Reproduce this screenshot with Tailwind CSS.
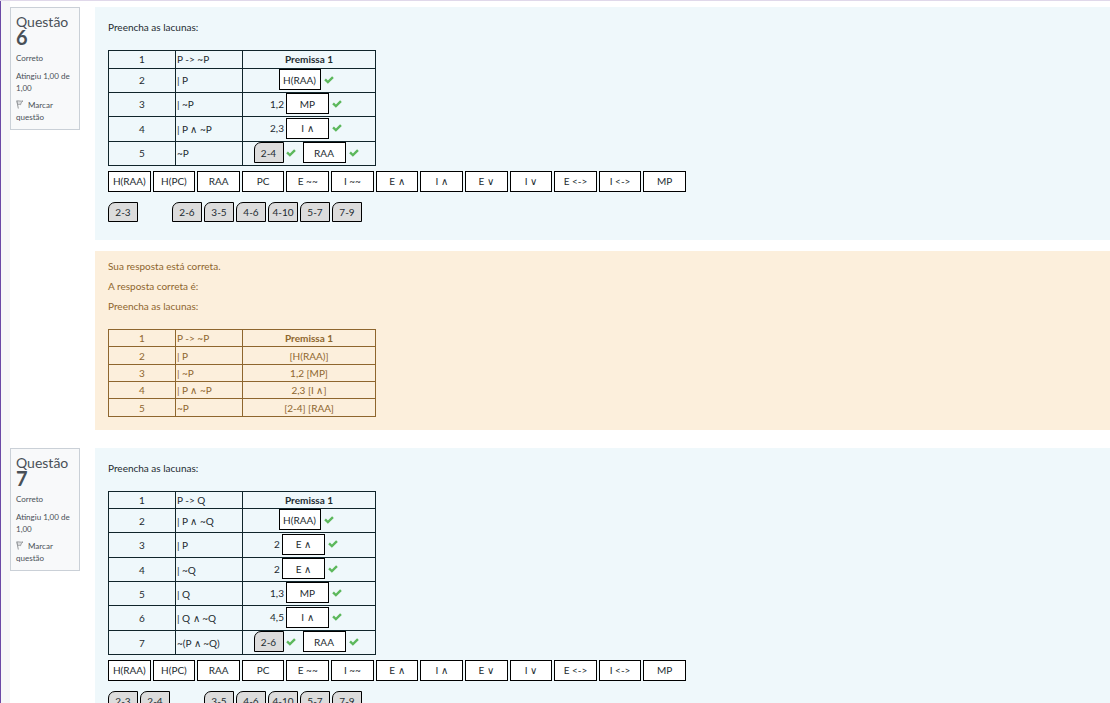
<!DOCTYPE html>
<html lang="pt-BR">
<head>
<meta charset="utf-8">
<title>Questionário</title>
<script src="https://cdn.jsdelivr.net/npm/@tailwindcss/browser@4"></script>
</head>
<body class="min-h-screen overflow-x-hidden border-t border-[#e0d8ea] bg-white font-['Lato',sans-serif] text-[10px] leading-4 text-[#1d2b30]">
<svg class="hidden" aria-hidden="true">
  <symbol id="check" viewBox="0 0 10 8"><path d="M0.200 4.200 1.900 2.500 3.900 4.400 8.100 0.200 9.800 1.900 3.900 7.800z" fill="#5cb85c"/></symbol>
  <symbol id="flag" viewBox="0 0 8 9"><path d="M.8.5 2.300 8.500" fill="none" stroke="#8a8d90" stroke-width=".9"/><path d="M1 1C3 .4 4.500 1.700 7 .9L5.200 2.700 4.600 4.700C3.500 4.200 2.600 4.300 1.700 4.700z" fill="#dcdee0" stroke="#8a8d90" stroke-width=".8"/></symbol>
</svg>
<div class="flex min-h-screen border-l border-[#6b48a5]">
  <div class="w-[9px] shrink-0 bg-[#f6f6f7]"></div>
  <main class="min-w-0 flex-1 pt-[6px]">

    <section class="mb-[18px] flex items-start gap-[15px]">
      <aside class="w-[70px] shrink-0 border border-[#cad0d7] bg-[#f8f9fa] px-[5px] pt-[6px] pb-[6px] text-[8px] leading-3 text-[#495057]">
        <h3 class="text-[14px] leading-[15px]">Questão <b class="block text-[20px] leading-4 font-bold">6</b></h3>
        <p class="mt-[7px]">Correto</p>
        <p class="mt-[6px]">Atingiu 1,00 de 1,00</p>
        <a href="#" class="mt-[5px] block"><svg class="mr-[2px] inline-block h-[9px] w-2 align-[-1px]"><use href="#flag"/></svg> Marcar questão</a>
      </aside>
      <div class="min-w-0 flex-1">
        <div class="bg-[#eff8fb] px-[13px] pt-3 pb-[18px]">
          <p class="mb-[15px]">Preencha as lacunas:</p>
          <table class="w-[268px] table-fixed border-collapse text-center leading-4 [&_td]:border [&_td]:border-[#10252b] [&_td]:p-0 [&_td]:pb-px [&_td:nth-child(2)]:pl-px [&_td:nth-child(2)]:text-left">
            <colgroup><col class="w-[67px]"><col class="w-[67px]"><col></colgroup>
            <tbody>
            <tr class="h-[18px]"><td>1</td><td>P -&gt; ~P</td><td><b>Premissa 1</b></td></tr>
            <tr class="h-6"><td>2</td><td>| P</td><td><div class="flex items-center justify-center pr-[6px] pb-px"><button class="h-[21px] w-[42px] border border-black bg-white">H(RAA)</button><svg class="ml-[3px] h-2 w-[10px]"><use href="#check"/></svg></div></td></tr>
            <tr class="h-6"><td>3</td><td>| ~P</td><td><div class="flex items-center justify-center pr-[6px] pb-px">1,2<button class="ml-[2px] h-[21px] w-[43px] border border-black bg-white">MP</button><svg class="ml-[3px] h-2 w-[10px]"><use href="#check"/></svg></div></td></tr>
            <tr class="h-[25px]"><td>4</td><td>| P ∧ ~P</td><td><div class="flex items-center justify-center pr-[6px] pb-px">2,3<button class="ml-[2px] h-[21px] w-[43px] border border-black bg-white">I ∧</button><svg class="ml-[3px] h-2 w-[10px]"><use href="#check"/></svg></div></td></tr>
            <tr class="h-6"><td>5</td><td>~P</td><td><div class="flex items-center justify-center pr-[6px] pb-px"><button class="h-[21px] w-[30px] rounded-tl-[7px] border border-black bg-[#dcdcdc]">2-4</button><svg class="ml-[2px] h-2 w-[10px]"><use href="#check"/></svg><button class="ml-[7px] h-[21px] w-[43px] border border-black bg-white">RAA</button><svg class="ml-[3px] h-2 w-[10px]"><use href="#check"/></svg></div></td></tr>
            </tbody>
          </table>
          <div class="mt-[5px] grid w-[578px] grid-cols-13 gap-[2px] [&>button]:h-[21px] [&>button]:border [&>button]:border-black [&>button]:bg-white [&>button]:pb-px">
            <button>H(RAA)</button><button>H(PC)</button><button>RAA</button><button>PC</button><button>E ~~</button><button>I ~~</button><button>E ∧</button><button>I ∧</button><button>E ∨</button><button>I ∨</button><button>E &lt;-&gt;</button><button>I &lt;-&gt;</button><button>MP</button>
          </div>
          <div class="mt-[10px] flex gap-[2px] [&>button]:h-5 [&>button]:w-[30px] [&>button]:rounded-tl-[7px] [&>button]:border [&>button]:border-black [&>button]:bg-[#dcdcdc]">
            <button>2-3</button><span class="w-[30px]"></span><button>2-6</button><button>3-5</button><button>4-6</button><button>4-10</button><button>5-7</button><button>7-9</button>
          </div>
        </div>
        <div class="mt-[11px] bg-[#fcefdc] px-[13px] pt-[7px] pb-[13px] text-[#8e662e]">
          <p class="mb-1">Sua resposta está correta.</p>
          <p class="mb-1">A resposta correta é:</p>
          <p class="mb-[15px]">Preencha as lacunas:</p>
          <table class="w-[268px] table-fixed border-collapse text-center leading-4 [&_td]:border [&_td]:border-[#8e662e] [&_td]:p-0 [&_td:nth-child(2)]:pl-px [&_td:nth-child(2)]:text-left">
            <colgroup><col class="w-[67px]"><col class="w-[67px]"><col></colgroup>
            <tbody>
            <tr class="h-[17px]"><td>1</td><td>P -&gt; ~P</td><td><b>Premissa 1</b></td></tr>
            <tr class="h-[18px]"><td>2</td><td>| P</td><td>[H(RAA)]</td></tr>
            <tr class="h-[17px]"><td>3</td><td>| ~P</td><td>1,2 [MP]</td></tr>
            <tr class="h-[17px]"><td>4</td><td>| P ∧ ~P</td><td>2,3 [I ∧]</td></tr>
            <tr class="h-[18px]"><td>5</td><td>~P</td><td>[2-4] [RAA]</td></tr>
            </tbody>
          </table>
        </div>
      </div>
    </section>

    <section class="flex items-start gap-[15px]">
      <aside class="w-[70px] shrink-0 border border-[#cad0d7] bg-[#f8f9fa] px-[5px] pt-[6px] pb-[6px] text-[8px] leading-3 text-[#495057]">
        <h3 class="text-[14px] leading-[15px]">Questão <b class="block text-[20px] leading-4 font-bold">7</b></h3>
        <p class="mt-[7px]">Correto</p>
        <p class="mt-[6px]">Atingiu 1,00 de 1,00</p>
        <a href="#" class="mt-[5px] block"><svg class="mr-[2px] inline-block h-[9px] w-2 align-[-1px]"><use href="#flag"/></svg> Marcar questão</a>
      </aside>
      <div class="min-w-0 flex-1">
        <div class="bg-[#eff8fb] px-[13px] pt-3 pb-[18px]">
          <p class="mb-[15px]">Preencha as lacunas:</p>
          <table class="w-[268px] table-fixed border-collapse text-center leading-4 [&_td]:border [&_td]:border-[#10252b] [&_td]:p-0 [&_td:nth-child(2)]:pl-px [&_td:nth-child(2)]:text-left">
            <colgroup><col class="w-[67px]"><col class="w-[67px]"><col></colgroup>
            <tbody>
            <tr class="h-[17px]"><td>1</td><td>P -&gt; Q</td><td><b>Premissa 1</b></td></tr>
            <tr class="h-6"><td>2</td><td>| P ∧ ~Q</td><td><div class="flex items-center justify-center pr-[6px] pb-[2px]"><button class="h-[21px] w-[42px] border border-black bg-white">H(RAA)</button><svg class="ml-[3px] h-2 w-[10px]"><use href="#check"/></svg></div></td></tr>
            <tr class="h-[25px]"><td>3</td><td>| P</td><td><div class="flex items-center justify-center pr-[6px] pb-[2px]">2<button class="ml-[2px] h-[21px] w-[43px] border border-black bg-white">E ∧</button><svg class="ml-[3px] h-2 w-[10px]"><use href="#check"/></svg></div></td></tr>
            <tr class="h-6"><td>4</td><td>| ~Q</td><td><div class="flex items-center justify-center pr-[6px] pb-[2px]">2<button class="ml-[2px] h-[21px] w-[43px] border border-black bg-white">E ∧</button><svg class="ml-[3px] h-2 w-[10px]"><use href="#check"/></svg></div></td></tr>
            <tr class="h-6"><td>5</td><td>| Q</td><td><div class="flex items-center justify-center pr-[6px] pb-[2px]">1,3<button class="ml-[2px] h-[21px] w-[43px] border border-black bg-white">MP</button><svg class="ml-[3px] h-2 w-[10px]"><use href="#check"/></svg></div></td></tr>
            <tr class="h-[25px]"><td>6</td><td>| Q ∧ ~Q</td><td><div class="flex items-center justify-center pr-[6px] pb-[2px]">4,5<button class="ml-[2px] h-[21px] w-[43px] border border-black bg-white">I ∧</button><svg class="ml-[3px] h-2 w-[10px]"><use href="#check"/></svg></div></td></tr>
            <tr class="h-6"><td>7</td><td>~(P ∧ ~Q)</td><td><div class="flex items-center justify-center pr-[6px] pb-[2px]"><button class="h-[21px] w-[30px] rounded-tl-[7px] border border-black bg-[#dcdcdc]">2-6</button><svg class="ml-[2px] h-2 w-[10px]"><use href="#check"/></svg><button class="ml-[7px] h-[21px] w-[43px] border border-black bg-white">RAA</button><svg class="ml-[3px] h-2 w-[10px]"><use href="#check"/></svg></div></td></tr>
            </tbody>
          </table>
          <div class="mt-[5px] grid w-[578px] grid-cols-13 gap-[2px] [&>button]:h-[21px] [&>button]:border [&>button]:border-black [&>button]:bg-white [&>button]:pb-px">
            <button>H(RAA)</button><button>H(PC)</button><button>RAA</button><button>PC</button><button>E ~~</button><button>I ~~</button><button>E ∧</button><button>I ∧</button><button>E ∨</button><button>I ∨</button><button>E &lt;-&gt;</button><button>I &lt;-&gt;</button><button>MP</button>
          </div>
          <div class="mt-[10px] flex gap-[2px] [&>button]:h-5 [&>button]:w-[30px] [&>button]:rounded-tl-[7px] [&>button]:border [&>button]:border-black [&>button]:bg-[#dcdcdc]">
            <button>2-3</button><button>2-4</button><span class="w-[30px]"></span><button>3-5</button><button>4-6</button><button>4-10</button><button>5-7</button><button>7-9</button>
          </div>
        </div>
      </div>
    </section>
  </main>
</div>
</body>
</html>
